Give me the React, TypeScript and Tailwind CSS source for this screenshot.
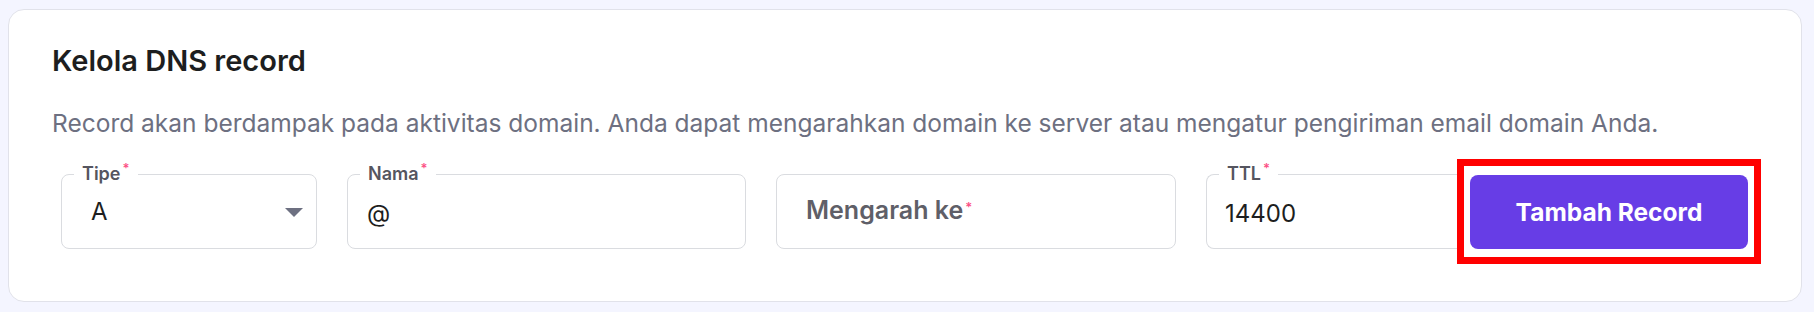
import React from "react";

const Req = () => (
  <span className="relative -top-[7px] ml-[2px] text-[13px] leading-none text-[#fc5185]">*</span>
);

const FloatLabel = ({ text }: { text: string }) => (
  <span className="absolute left-3 top-[-10px] bg-white px-2 text-[18px] font-semibold leading-[18px] text-[#55555f]">
    {text}
    <Req />
  </span>
);

const App = () => {
  return (
    <div
      className="min-h-screen bg-[#f4f5ff] pb-[11px] pl-2 pr-[12px] pt-[9px]"
      style={{ fontFamily: "Inter, 'Noto Sans', sans-serif" }}
    >
      <div className="rounded-2xl border border-[#e1e2ea] bg-white pb-[37px] pl-[43px] pr-[39px] pt-[35px]">
        <h2 className="text-[29px] font-semibold leading-[32px] text-[#1d1e20]">
          Kelola DNS record
        </h2>
        <p className="mt-[30px] text-[24.5px] leading-[32px] text-[#6d7081]">
          Record akan berdampak pada aktivitas domain. Anda dapat mengarahkan domain ke server atau
          mengatur pengiriman email domain Anda.
        </p>

        <div className="ml-[9px] mt-[20px] flex items-center">
          {/* Tipe */}
          <div className="relative flex h-[75px] w-[256px] items-center justify-between rounded-lg border border-[#dadce0] pl-[29px] pr-[12px]">
            <FloatLabel text="Tipe" />
            <span className="text-[24px] text-[#1d1e20]">A</span>
            <svg width="18" height="9" viewBox="0 0 18 9" className="mr-[1px] mt-[2px]">
              <path d="M0 0 H18 L9 9 Z" fill="#6d7081" />
            </svg>
          </div>

          {/* Nama */}
          <div className="relative ml-[30px] flex h-[75px] w-[399px] items-center rounded-lg border border-[#dadce0] pl-[19px]">
            <FloatLabel text="Nama" />
            <span className="mt-[4px] text-[24px] text-[#1d1e20]">@</span>
          </div>

          {/* Mengarah ke */}
          <div className="ml-[30px] flex h-[75px] w-[400px] items-center rounded-lg border border-[#dadce0] pl-[29px]">
            <span className="mb-[2px] text-[25px] font-semibold text-[#5f5f68]">
              Mengarah ke
              <Req />
            </span>
          </div>

          {/* TTL */}
          <div className="relative ml-[30px] flex h-[75px] w-[251px] items-center rounded-l-lg border border-r-0 border-[#dadce0] pl-[18px]">
            <FloatLabel text="TTL" />
            <span className="mt-[4px] text-[24px] text-[#1d1e20]">14400</span>
          </div>

          {/* Button with highlight box */}
          <div className="border-[7px] border-[#ff0000] bg-white px-[6px] pb-[8px] pt-[9px]">
            <button className="flex h-[74px] w-[278px] items-center justify-center rounded-lg bg-[#673de6] text-[24.5px] font-bold text-white">
              Tambah Record
            </button>
          </div>
        </div>
      </div>
    </div>
  );
};

export default App;
